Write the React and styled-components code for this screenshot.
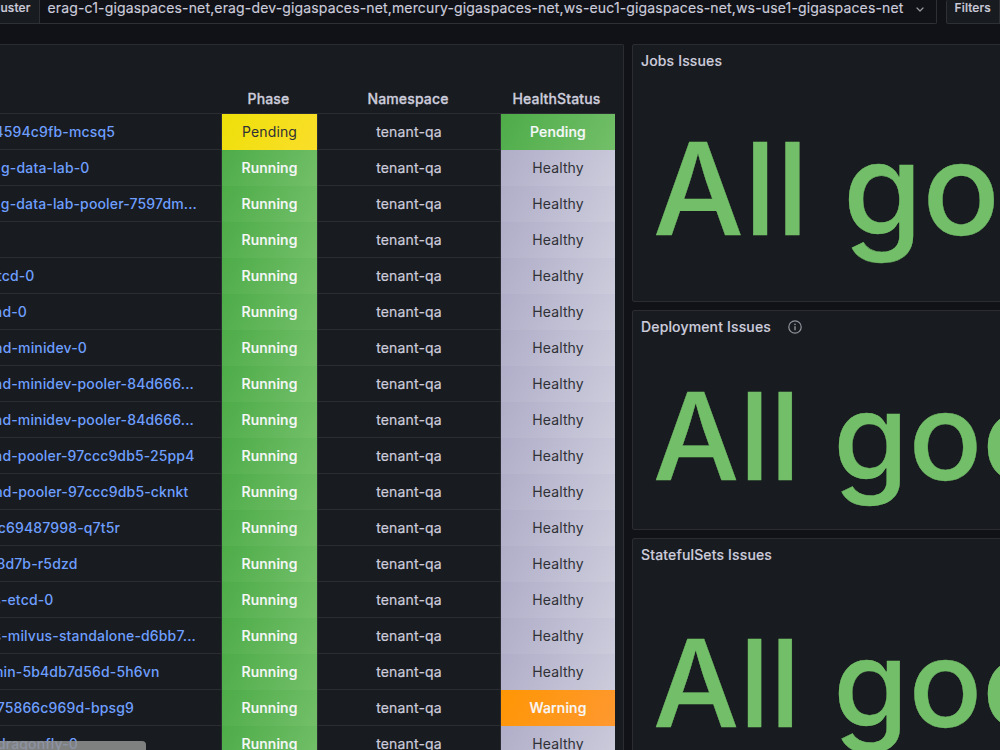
import styled, { createGlobalStyle, css } from "styled-components";

const clusters =
  "erag-c1-gigaspaces-net,erag-dev-gigaspaces-net,mercury-gigaspaces-net,ws-euc1-gigaspaces-net,ws-use1-gigaspaces-net";

// gap = free space between the end of the name and the phase column
const pods = [
  { name: "4594c9fb-mcsq5", gap: 106, phase: "Pending", health: "Pending" },
  { name: "g-data-lab-0", gap: 131.5 },
  { name: "g-data-lab-pooler-7597dm...", gap: 24 },
  { name: "", gap: 0 },
  { name: "tcd-0", gap: 186.5 },
  { name: "nd-0", gap: 194 },
  { name: "nd-minidev-0", gap: 134 },
  { name: "nd-minidev-pooler-84d666...", gap: 27 },
  { name: "nd-minidev-pooler-84d666...", gap: 27 },
  { name: "nd-pooler-97ccc9db5-25pp4", gap: 26.5 },
  { name: "nd-pooler-97ccc9db5-cknkt", gap: 32.5 },
  { name: "c69487998-q7t5r", gap: 101 },
  { name: "8d7b-r5dzd", gap: 143.5 },
  { name: "s-etcd-0", gap: 167.5 },
  { name: "s-milvus-standalone-d6bb7...", gap: 25 },
  { name: "min-5b4db7d56d-5h6vn", gap: 61.5 },
  { name: "75866c969d-bpsg9", gap: 87, health: "Warning" },
  { name: "dragonfly-0", gap: 143 },
];

const phaseTone = { Pending: "yellow", Running: "green" };
const healthTone = { Pending: "green", Healthy: "grey", Warning: "orange" };

function StatPanel({ title, info, height, size, top }) {
  return (
    <Stat $height={height}>
      <StatHeader>
        {title}
        {info && <InfoIcon />}
      </StatHeader>
      <StatValue $size={size} $top={top}>All good</StatValue>
    </Stat>
  );
}

function InfoIcon() {
  return (
    <Icon width="14" height="14" viewBox="0 0 14 14" fill="none">
      <circle cx="7" cy="7" r="6.2" stroke="currentColor" strokeWidth="1.2" />
      <path d="M7 6.7v3" stroke="currentColor" strokeWidth="1.4" strokeLinecap="round" />
      <circle cx="7" cy="4.4" r="0.8" fill="currentColor" />
    </Icon>
  );
}

export default function App() {
  return (
    <>
      <GlobalStyle />
      <Page>
        <Toolbar>
          <ClusterLabel>Cluster</ClusterLabel>
          <ClusterSelect>
            <span>{clusters}</span>
            <svg width="8" height="5" viewBox="0 0 8 5" fill="none">
              <path d="M1 1l3 3 3-3" stroke="#9a9ba5" strokeWidth="1.2" strokeLinecap="round" strokeLinejoin="round" />
            </svg>
          </ClusterSelect>
          <FiltersLabel>Filters</FiltersLabel>
        </Toolbar>

        <Dashboard>
          <TablePanel>
            <HeadRow>
              <HeadCell />
              <HeadCell>Phase</HeadCell>
              <HeadCell>Namespace</HeadCell>
              <HeadCell>HealthStatus</HeadCell>
            </HeadRow>
            {pods.map(({ name, gap, phase = "Running", health = "Healthy" }, i) => (
              <Row key={i}>
                <NameCell $gap={gap}>
                  <a>{name}</a>
                </NameCell>
                <StatusCell $tone={phaseTone[phase]}>{phase}</StatusCell>
                <Cell>tenant-qa</Cell>
                <StatusCell $tone={healthTone[health]}>{health}</StatusCell>
              </Row>
            ))}
          </TablePanel>
          <StatColumn>
            <StatPanel title="Jobs Issues" height={258} size={128} top={35} />
            <StatPanel title="Deployment Issues" info height={220} size={121.5} top={20} />
            <StatPanel title="StatefulSets Issues" height={258} size={121.5} top={39} />
          </StatColumn>
        </Dashboard>
        <ScrollThumb />
      </Page>
    </>
  );
}

const GlobalStyle = createGlobalStyle`
  * {
    box-sizing: border-box;
  }
  body {
    margin: 0;
    background: #111217;
    overflow: hidden;
  }
`;

const Page = styled.div`
  position: relative;
  width: 1000px;
  height: 750px;
  overflow: hidden;
  background: #111217;
  color: #ccccdc;
  font-family: Inter, "Liberation Sans", sans-serif;
  font-size: 14px;
  letter-spacing: 0.15px;
`;

const Toolbar = styled.div`
  display: flex;
  height: 24px;
`;

const labelBox = css`
  display: flex;
  height: 24px;
  padding-bottom: 8px;
  align-items: center;
  background: #181b1f;
  border: solid #2e3036;
  border-width: 0 1px 1px;
  font-size: 12px;
  font-weight: 500;
  white-space: nowrap;
  -webkit-text-stroke: 0.2px;
`;

const ClusterLabel = styled.div`
  ${labelBox}
  width: 40px;
  flex: none;
  justify-content: flex-end;
  padding-right: 8.5px;
  overflow: hidden;
  border-left: none;
`;

const ClusterSelect = styled.div`
  display: flex;
  flex: none;
  width: 897px;
  height: 24px;
  padding: 0 16px 9px 7.5px;
  justify-content: space-between;
  align-items: center;
  border: solid #2e3036;
  border-width: 0 1px 1px 0;
  border-radius: 0 0 2px 0;
  white-space: nowrap;
  -webkit-text-stroke: 0.15px;

  svg {
    margin-right: -4px;
    margin-top: 4px;
  }
`;

const FiltersLabel = styled.div`
  ${labelBox}
  flex: none;
  width: 54px;
  margin-left: 9px;
  padding-left: 7.5px;
  border-radius: 2px 0 0 2px;
`;

const Dashboard = styled.div`
  display: flex;
  gap: 8px;
  padding-top: 20px;
`;

const TablePanel = styled.div`
  flex: none;
  width: 624px;
  height: 760px;
  padding: 40px 8px 0 0;
  background: #181b1f;
  border: solid #2a2c32;
  border-width: 1px 1px 0 0;
  border-radius: 0 2px 0 0;
`;

const Row = styled.div`
  display: grid;
  grid-template-columns: 222px 96px 183px 114px;
  height: 36px;
`;

const HeadRow = styled(Row)`
  height: 29px;
  border-bottom: 1px solid #2b2d33;
  font-weight: 500;
  -webkit-text-stroke: 0.3px;
`;

const HeadCell = styled.div`
  display: flex;
  align-items: center;
  justify-content: center;
  padding: 0 3px 2px 0;
`;

const Cell = styled.div`
  display: flex;
  min-width: 0;
  align-items: center;
  justify-content: center;
  border: solid #2b2d33;
  border-width: 0 1px 1px 0;
  white-space: nowrap;
  -webkit-text-stroke: 0.2px;
`;

const NameCell = styled(Cell)`
  justify-content: flex-end;
  padding-right: ${({ $gap }) => $gap}px;
  overflow: hidden;
  color: #6e9fff;
  font-weight: 500;
  -webkit-text-stroke: 0;
`;

const tones = {
  green: css`
    background: linear-gradient(120deg, #4dac48, #73bf69);
    color: #f7f8fa;
    font-weight: 500;
    -webkit-text-stroke: 0.2px;
  `,
  yellow: css`
    background: linear-gradient(120deg, #eee009, #fade2a);
    color: #303136;
    -webkit-text-stroke: 0;
  `,
  grey: css`
    background: linear-gradient(120deg, #b0adc8, #ccccdc);
    color: #303136;
    -webkit-text-stroke: 0;
  `,
  orange: css`
    background: linear-gradient(120deg, #ff9604, #ff9830);
    color: #f7f8fa;
    font-weight: 500;
    -webkit-text-stroke: 0.2px;
  `,
};

const StatusCell = styled(Cell)`
  border-bottom: none;
  padding-bottom: 1px;
  background-clip: padding-box !important;
  ${({ $tone }) => tones[$tone]}

  &:last-child {
    border-right: none;
  }
`;

const StatColumn = styled.div`
  display: flex;
  flex: none;
  flex-direction: column;
  gap: 8px;
  width: 600px;
`;

const Stat = styled.section`
  height: ${({ $height }) => $height}px;
  background: #181b1f;
  border: 1px solid #2a2c32;
  border-radius: 2px;
  overflow: hidden;
`;

const StatHeader = styled.div`
  display: flex;
  align-items: center;
  height: 32px;
  padding: 0 0 1px 8px;
  font-weight: 500;
  -webkit-text-stroke: 0.15px;
`;

const Icon = styled.svg`
  margin-left: 17px;
  margin-top: 1px;
  color: #92939d;
`;

const StatValue = styled.div`
  padding: ${({ $top }) => $top}px 0 0 20px;
  color: #73bf69;
  font-size: ${({ $size }) => $size}px;
  font-weight: 500;
  line-height: 1.2;
  letter-spacing: 0.15px;
  white-space: nowrap;
  -webkit-text-stroke: 0.4px;
`;

const ScrollThumb = styled.div`
  position: absolute;
  left: 0;
  bottom: 0;
  width: 146px;
  height: 9px;
  border-radius: 0 4px 0 0;
  background: rgba(146, 146, 146, 0.85);
`;
